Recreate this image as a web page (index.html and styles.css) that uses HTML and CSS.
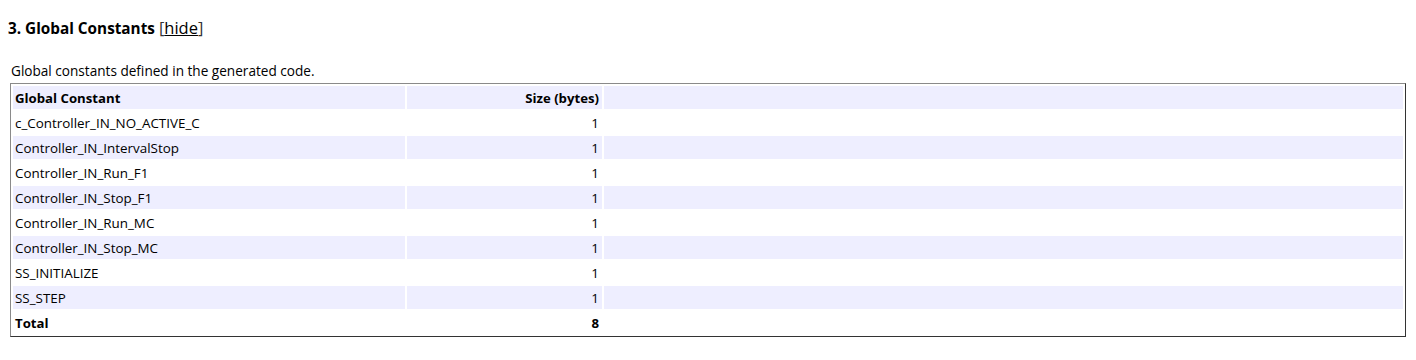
FILE: index.html
```html
<!DOCTYPE html>
<html>
<head>
<meta charset="utf-8">
<link rel="stylesheet" href="styles.css">
</head>
<body>
<h3 class="section-title">3. Global Constants <span class="toggle">[<a class="toggle-link">hide</a>]</span></h3>
<div class="section-body">
  <p class="description">Global constants defined in the generated code.</p>
  <table class="alt-table">
    <colgroup>
      <col class="col-name">
      <col class="col-size">
      <col class="col-fill">
    </colgroup>
    <tr class="head-row"><th class="name">Global Constant</th><th class="num">Size (bytes)</th><th></th></tr>
    <tr class="row"><td class="name">c_Controller_IN_NO_ACTIVE_C</td><td class="num">1</td><td></td></tr>
    <tr class="row alt"><td class="name">Controller_IN_IntervalStop</td><td class="num">1</td><td></td></tr>
    <tr class="row"><td class="name">Controller_IN_Run_F1</td><td class="num">1</td><td></td></tr>
    <tr class="row alt"><td class="name">Controller_IN_Stop_F1</td><td class="num">1</td><td></td></tr>
    <tr class="row"><td class="name">Controller_IN_Run_MC</td><td class="num">1</td><td></td></tr>
    <tr class="row alt"><td class="name">Controller_IN_Stop_MC</td><td class="num">1</td><td></td></tr>
    <tr class="row"><td class="name">SS_INITIALIZE</td><td class="num">1</td><td></td></tr>
    <tr class="row alt"><td class="name">SS_STEP</td><td class="num">1</td><td></td></tr>
    <tr class="row total"><td class="name">Total</td><td class="num">8</td><td></td></tr>
  </table>
</div>
</body>
</html>
```

FILE: styles.css
```css
html, body {
  background: #ffffff;
}
body {
  margin: 0 8px;
  font-family: "Open Sans", "DejaVu Sans", sans-serif;
  color: #000000;
}
.section-title {
  margin: 17px 0 0 0;
  font-size: 15.3px;
  line-height: 22px;
  font-weight: 700;
}
.toggle {
  font-weight: 400;
  font-size: 16.5px;
  color: #333333;
}
.toggle-link {
  color: #000000;
  text-decoration: underline;
}
.section-body {
  padding-left: 2px;
}
.description {
  margin: 23px 0 0 1px;
  font-size: 13.6px;
  line-height: 18px;
}
.alt-table {
  margin-top: 3px;
  width: 1396px;
  border-collapse: separate;
  border-spacing: 2px;
  border-style: solid;
  border-width: 1px;
  border-color: #8a8a8a #333333 #333333 #8a8a8a;
  font-size: 13.4px;
}
.col-name { width: 392px; }
.col-size { width: 195px; }
.alt-table th,
.alt-table td {
  height: 23px;
  padding: 0 3px 0 2px;
  box-sizing: border-box;
  line-height: 16px;
  vertical-align: middle;
}
.alt-table th {
  font-weight: 700;
  font-size: 13.2px;
  text-align: left;
}
.head-row th,
.row.alt td {
  background: #eeeeff;
}
.alt-table .num {
  text-align: right;
}
.total td {
  font-weight: 700;
  font-size: 13.2px;
}
```
